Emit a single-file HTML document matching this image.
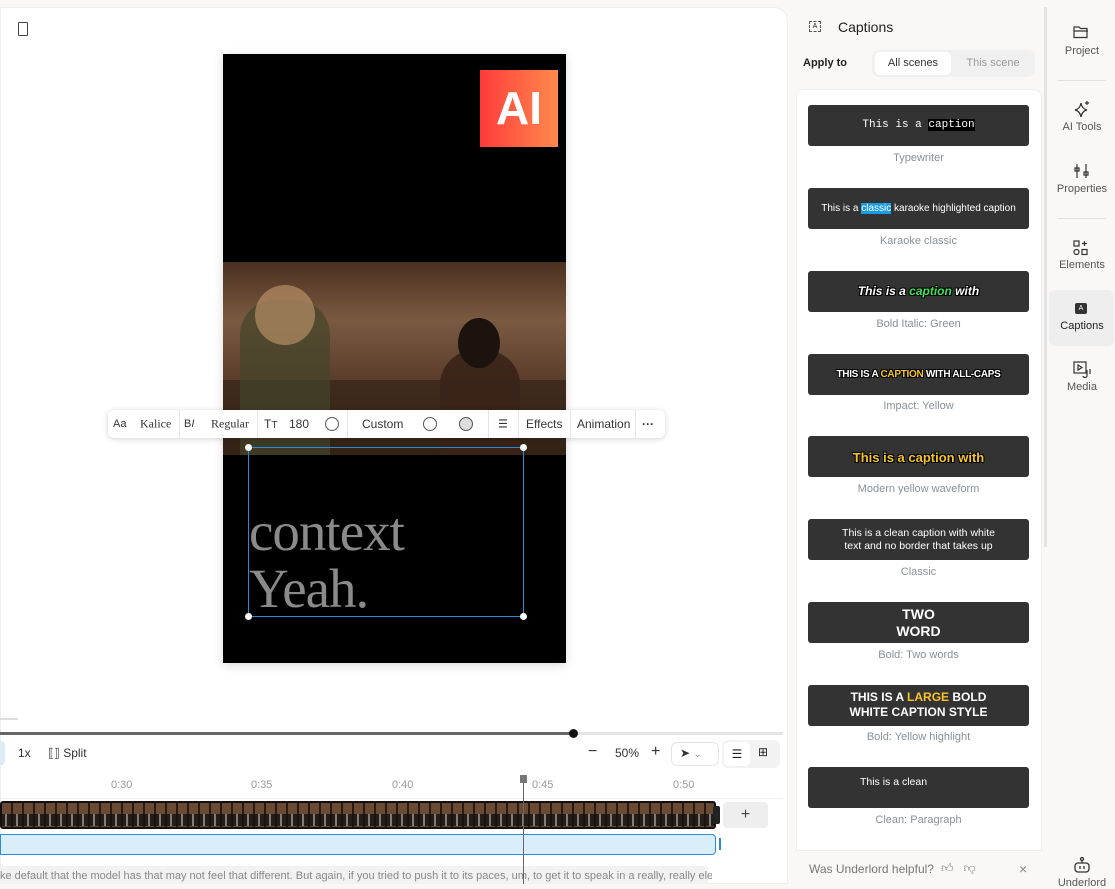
<!DOCTYPE html>
<html><head><meta charset="utf-8"><style>
*{box-sizing:border-box;margin:0;padding:0}
body{width:1115px;height:884px;overflow:hidden;background:#f9f8f6;font-family:"Liberation Sans",sans-serif;position:relative;color:#222}
.abs{position:absolute}
.main{left:0;top:7px;width:788px;height:877px;background:#fff;border:1px solid #eee;border-radius:0 14px 0 0}
.card{position:absolute;left:808px;width:221px;height:41px;background:#333;border-radius:3px;color:#fff;text-align:center;font-weight:bold}
.lbl{position:absolute;left:796px;width:245px;text-align:center;font-size:11px;color:#8a8f99}
.side{position:absolute;left:1049px;width:66px;text-align:center;font-size:11px;color:#555}
.ico{position:absolute;left:1073px}
.tb{position:absolute;top:424px;transform:translateY(-50%);font-size:12px;color:#333}
.sep{position:absolute;top:410px;width:1px;height:28px;background:#e5e5e5}
.out{text-shadow:-1px -1px 0 #000,1px -1px 0 #000,-1px 1px 0 #000,1px 1px 0 #000}
</style></head><body>
<div class="abs main"></div>
<div class="abs" style="left:18px;top:22px;width:10px;height:14px;border:1.5px solid #444;border-radius:1px"></div>
<!-- video -->
<div class="abs" style="left:223px;top:54px;width:343px;height:609px;background:#000;box-shadow:0 2px 10px rgba(0,0,0,.15)"></div>
<div class="abs" style="left:480px;top:70px;width:78px;height:77px;background:linear-gradient(90deg,#ff3b3b,#ff8a4c)"></div>
<div class="abs" style="left:480px;top:80px;width:78px;text-align:center;color:#fff;font-weight:bold;font-size:46px;line-height:56px">AI</div>
<div class="abs" style="left:223px;top:262px;width:343px;height:193px;background:linear-gradient(180deg,#4a3020 0%,#7a5a40 30%,#5c3e2c 60%,#3a2618 100%)"></div>
<div class="abs" style="left:223px;top:380px;width:343px;height:75px;background:#2f1f16;opacity:.6"></div>
<div class="abs" style="left:240px;top:300px;width:90px;height:155px;background:#43442a;opacity:.7;border-radius:35px 35px 0 0"></div>
<div class="abs" style="left:255px;top:285px;width:60px;height:60px;background:#c79a70;opacity:.6;border-radius:50%"></div>
<div class="abs" style="left:440px;top:350px;width:80px;height:105px;background:#3a2218;opacity:.9;border-radius:35px 35px 0 0"></div>
<div class="abs" style="left:458px;top:318px;width:42px;height:50px;background:#1c120e;border-radius:50%"></div>
<div class="abs" style="left:248px;top:447px;width:276px;height:170px;border:1.5px solid #2a8cd6"></div>
<div class="abs" style="left:245px;top:444px;width:7px;height:7px;border-radius:50%;background:#fff"></div>
<div class="abs" style="left:520px;top:444px;width:7px;height:7px;border-radius:50%;background:#fff"></div>
<div class="abs" style="left:245px;top:613px;width:7px;height:7px;border-radius:50%;background:#fff"></div>
<div class="abs" style="left:520px;top:613px;width:7px;height:7px;border-radius:50%;background:#fff"></div>
<div class="abs" style="left:249px;top:503px;font-family:'Liberation Serif',serif;font-size:55px;line-height:57px;letter-spacing:-1px;color:#8a8a8a">context<br>Yeah.</div>
<!-- toolbar -->
<div class="abs" style="left:108px;top:410px;width:557px;height:28px;background:#fff;border-radius:6px;box-shadow:0 1px 6px rgba(0,0,0,.18)"></div>
<div class="tb" style="left:113px;font-size:11px">Aa</div>
<div class="tb" style="left:140px;font-family:'Liberation Serif',serif">Kalice</div>
<div class="sep" style="left:179px"></div>
<div class="tb" style="left:184px;font-size:11px">B<i>I</i></div>
<div class="tb" style="left:211px;font-family:'Liberation Serif',serif">Regular</div>
<div class="sep" style="left:257px"></div>
<div class="tb" style="left:264px">T<small>T</small></div>
<div class="tb" style="left:289px">180</div>
<div class="abs" style="left:325px;top:417px;width:14px;height:14px;border:1px solid #555;border-radius:50%"></div>
<div class="sep" style="left:347px"></div>
<div class="tb" style="left:362px">Custom</div>
<div class="abs" style="left:423px;top:417px;width:14px;height:14px;border:1px solid #555;border-radius:50%"></div>
<div class="abs" style="left:459px;top:417px;width:14px;height:14px;border:1px solid #555;border-radius:50%;background:#ddd"></div>
<div class="sep" style="left:488px"></div>
<div class="tb" style="left:498px;font-size:11px">☰</div>
<div class="sep" style="left:518px"></div>
<div class="tb" style="left:526px">Effects</div>
<div class="sep" style="left:570px"></div>
<div class="tb" style="left:577px">Animation</div>
<div class="sep" style="left:635px"></div>
<div class="tb" style="left:642px;font-weight:bold">···</div>
<!-- timeline -->
<div class="abs" style="left:0;top:718px;width:18px;height:2px;background:#ddd"></div>
<div class="abs" style="left:0;top:732px;width:783px;height:3px;background:#e5e5e5"></div>
<div class="abs" style="left:0;top:732px;width:573px;height:3px;background:#666"></div>
<div class="abs" style="left:569px;top:729px;width:9px;height:9px;border-radius:50%;background:#111"></div>
<div class="abs" style="left:0;top:741px;width:5px;height:24px;background:#dcedf8;border-radius:0 4px 4px 0"></div>
<div class="abs" style="left:18px;top:746px;font-size:12px;color:#333">1x</div>
<div class="abs" style="left:48px;top:746px;font-size:12px;color:#333">⟦⟧ Split</div>
<div class="abs" style="left:588px;top:743px;font-size:16px;color:#333">−</div>
<div class="abs" style="left:615px;top:746px;font-size:12px;color:#333">50%</div>
<div class="abs" style="left:651px;top:743px;font-size:16px;color:#333">+</div>
<div class="abs" style="left:671px;top:742px;width:48px;height:24px;border:1px solid #e5e5e5;border-radius:6px;font-size:12px;padding:3px 8px;color:#333">➤ <small style="color:#999">⌄</small></div>
<div class="abs" style="left:722px;top:740px;width:58px;height:28px;background:#f2f2f2;border-radius:6px"></div>
<div class="abs" style="left:724px;top:742px;width:26px;height:24px;background:#fff;border-radius:5px;font-size:12px;text-align:center;line-height:24px">☰</div>
<div class="abs" style="left:758px;top:745px;font-size:12px">⊞</div>
<div class="abs" style="left:0;top:779px;width:783px;font-size:11px;color:#999">
<span class="abs" style="left:111px">0:30</span><span class="abs" style="left:251px">0:35</span><span class="abs" style="left:392px">0:40</span><span class="abs" style="left:532px">0:45</span><span class="abs" style="left:673px">0:50</span></div>
<div class="abs" style="left:0;top:798px;width:783px;height:1px;background:#eee"></div>
<div class="abs" style="left:0;top:801px;width:716px;height:28px;background:repeating-linear-gradient(90deg,#6a4a35 0 9px,#2a1a12 9px 11px);border:2px solid #111;border-radius:3px"></div>
<div class="abs" style="left:2px;top:814px;width:712px;height:12px;background:repeating-linear-gradient(90deg,#111 0 3px,#888 3px 5px,#111 5px 11px);opacity:.8"></div>
<div class="abs" style="left:713px;top:806px;width:7px;height:18px;background:#222;border-radius:2px"></div>
<div class="abs" style="left:723px;top:802px;width:45px;height:26px;background:#eee;border-radius:4px;text-align:center;line-height:26px;font-size:16px;color:#444">+</div>
<div class="abs" style="left:0;top:834px;width:716px;height:21px;background:#daeef9;border:1.5px solid #2a8cd6;border-radius:0 4px 4px 0"></div>
<div class="abs" style="left:719px;top:838px;width:2px;height:12px;background:#2a8cd6"></div>
<div class="abs" style="left:0;top:866px;width:708px;height:18px;background:#f2f2f2;border-radius:3px"></div>
<div class="abs" style="left:0;top:870px;width:712px;font-size:11px;color:#888;white-space:nowrap;overflow:hidden">ke default that the model has that may not feel that different. But again, if you tried to push it to its paces, um, to get it to speak in a really, really eleva -</div>
<div class="abs" style="left:523px;top:780px;width:1px;height:104px;background:#666"></div>
<div class="abs" style="left:520px;top:775px;width:7px;height:8px;background:#777"></div>
<!-- right panel -->
<div class="abs" style="left:809px;top:21px;width:12px;height:11px;border:1px dashed #555;font-size:7px;text-align:center;line-height:9px">A</div>
<div class="abs" style="left:838px;top:19px;font-size:14px;color:#222">Captions</div>
<div class="abs" style="left:803px;top:57px;font-size:11px;font-weight:bold;color:#222">Apply to</div>
<div class="abs" style="left:872px;top:50px;width:163px;height:27px;background:#f0f0f0;border-radius:7px"></div>
<div class="abs" style="left:875px;top:52px;width:76px;height:23px;background:#fff;border-radius:5px;font-size:11px;text-align:center;line-height:23px;color:#333">All scenes</div>
<div class="abs" style="left:953px;top:52px;width:80px;height:23px;font-size:11px;text-align:center;line-height:23px;color:#999">This scene</div>
<div class="abs" style="left:796px;top:89px;width:246px;height:762px;background:#fff;border:1px solid #eee;border-radius:8px 8px 0 0"></div>
<div class="card" style="top:105px;font-family:'Liberation Mono',monospace;font-size:11px;line-height:41px;font-weight:normal">This is a <span style="background:#000">caption</span></div>
<div class="lbl" style="top:152px">Typewriter</div>
<div class="card" style="top:188px;font-size:10px;line-height:41px;font-weight:normal">This is a <span style="background:#1a9be6">classic</span> karaoke highlighted caption</div>
<div class="lbl" style="top:235px">Karaoke classic</div>
<div class="card out" style="top:271px;font-size:12px;line-height:41px;font-style:italic">This is a <span style="color:#3be35a">caption</span> with</div>
<div class="lbl" style="top:318px">Bold Italic: Green</div>
<div class="card out" style="top:354px;font-size:10px;line-height:41px;letter-spacing:-.3px">THIS IS A <span style="color:#f6c52a">CAPTION</span> WITH ALL-CAPS</div>
<div class="lbl" style="top:400px">Impact: Yellow</div>
<div class="card out" style="top:436px;font-size:13px;line-height:44px;color:#f6c52a">This is a caption with</div>
<div class="lbl" style="top:483px">Modern yellow waveform</div>
<div class="card" style="top:519px;font-size:10.5px;line-height:13px;padding-top:8px;font-weight:normal">This is a clean caption with white<br>text and no border that takes up</div>
<div class="lbl" style="top:566px">Classic</div>
<div class="card" style="top:602px;font-size:14px;line-height:17px;padding-top:4px">TWO<br>WORD</div>
<div class="lbl" style="top:649px">Bold: Two words</div>
<div class="card" style="top:685px;font-size:12px;line-height:15px;padding-top:5px">THIS IS A <span style="color:#f6c52a">LARGE</span> BOLD<br>WHITE CAPTION STYLE</div>
<div class="lbl" style="top:731px">Bold: Yellow highlight</div>
<div class="card" style="top:767px;font-size:10.5px;line-height:30px;font-weight:normal;padding-right:50px">This is a clean</div>
<div class="lbl" style="top:814px">Clean: Paragraph</div>
<div class="abs" style="left:809px;top:862px;font-size:12px;color:#777">Was Underlord helpful?</div>
<div class="abs" style="left:941px;top:861px;font-size:12px;color:#888">👍︎ &nbsp; 👎︎</div>
<div class="abs" style="left:1019px;top:861px;font-size:14px;color:#888">×</div>
<div class="abs" style="left:1044px;top:7px;width:3px;height:540px;background:#e3e3e3"></div>
<!-- sidebar -->
<svg class="ico" style="top:25px" width="16" height="14" viewBox="0 0 16 14" fill="none" stroke="#333" stroke-width="1.2"><path d="M1 2h5l1.5 1.5H14v9H1z M1 6h14"/></svg>
<div class="side" style="top:45px">Project</div>
<div class="abs" style="left:1058px;top:80px;width:48px;height:1px;background:#e0e0e0"></div>
<svg class="ico" style="top:100px" width="18" height="18" viewBox="0 0 18 18" fill="none" stroke="#333" stroke-width="1.2"><path d="M8 3 Q9 9 14 10 Q9 11 8 17 Q7 11 2 10 Q7 9 8 3z M14 1v4 M12 3h4"/></svg>
<div class="side" style="top:121px">AI Tools</div>
<svg class="ico" style="top:163px" width="18" height="16" viewBox="0 0 18 16" fill="none" stroke="#333" stroke-width="1.2"><path d="M4 1v14 M2 5h4v3H2z M13 1v14 M11 9h4v3h-4z"/></svg>
<div class="side" style="top:183px">Properties</div>
<div class="abs" style="left:1058px;top:218px;width:48px;height:1px;background:#e0e0e0"></div>
<svg class="ico" style="top:240px" width="16" height="16" viewBox="0 0 16 16" fill="none" stroke="#333" stroke-width="1.2"><rect x="1" y="1" width="5" height="5"/><path d="M11.5 1v5 M9 3.5h5"/><circle cx="3.5" cy="12" r="2.5"/><rect x="9" y="9.5" width="5" height="5"/></svg>
<div class="side" style="top:259px">Elements</div>
<div class="abs" style="left:1049px;top:290px;width:65px;height:56px;background:#eeeeee;border-radius:6px"></div>
<div class="abs" style="left:1075px;top:303px;width:12px;height:11px;background:#333;border-radius:2px;color:#fff;font-size:7px;text-align:center;line-height:11px">A</div>
<div class="side" style="top:320px;color:#222">Captions</div>
<svg class="ico" style="top:361px" width="18" height="17" viewBox="0 0 18 17" fill="none" stroke="#333" stroke-width="1.2"><rect x="1" y="1" width="12" height="11"/><path d="M5 4l4 2.5L5 9z M14 9v6 M10 15a2 1.5 0 1 0 4 0 M17 8v5"/></svg>
<div class="side" style="top:381px">Media</div>
<svg class="ico" style="top:857px" width="18" height="16" viewBox="0 0 18 16" fill="none" stroke="#333" stroke-width="1.3"><circle cx="9" cy="2" r="1.5"/><path d="M9 3.5v2"/><rect x="2" y="6" width="14" height="9" rx="3"/><path d="M7 9v3 M11 9v3"/></svg>
<div class="side" style="top:877px">Underlord</div>
</body></html>
